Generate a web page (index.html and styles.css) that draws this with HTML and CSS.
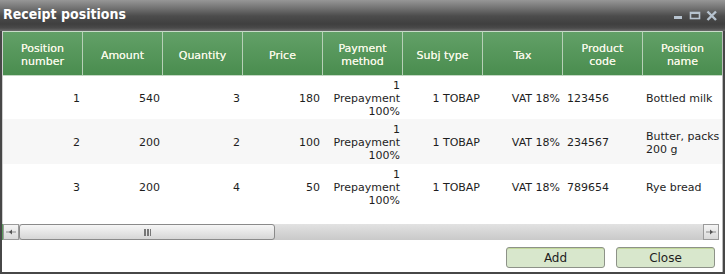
FILE: index.html
```html
<!DOCTYPE html>
<html>
<head>
<meta charset="utf-8">
<link rel="stylesheet" href="styles.css">
</head>
<body>
<div class="window">
  <div class="titlebar">
    <span class="title">Receipt positions</span>
    <svg class="controls" width="52" height="31" viewBox="0 0 52 31">
      <rect x="9" y="16" width="8" height="3" fill="#b7c3cf"/>
      <rect x="25.5" y="12.5" width="9" height="6" fill="none" stroke="#b7c3cf" stroke-width="1.6"/>
      <rect x="25" y="12" width="10" height="2" fill="#b7c3cf"/>
      <path d="M42.5 11.5 L51 20 M51 11.5 L42.5 20" stroke="#b7c3cf" stroke-width="2.4"/>
    </svg>
  </div>
  <div class="content">
    <div class="grid">
      <table class="table">
        <thead>
          <tr>
            <th>Position<br>number</th>
            <th>Amount</th>
            <th>Quantity</th>
            <th>Price</th>
            <th>Payment<br>method</th>
            <th>Subj type</th>
            <th>Tax</th>
            <th>Product<br>code</th>
            <th>Position<br>name</th>
          </tr>
        </thead>
        <tbody>
          <tr class="r1">
            <td>1</td><td>540</td><td>3</td><td>180</td>
            <td>1<br>Prepayment<br>100%</td><td>1 TOBAP</td><td>VAT 18%</td>
            <td class="left">123456</td><td class="left name">Bottled milk</td>
          </tr>
          <tr class="r2 alt">
            <td>2</td><td>200</td><td>2</td><td>100</td>
            <td>1<br>Prepayment<br>100%</td><td>1 TOBAP</td><td>VAT 18%</td>
            <td class="left">234567</td><td class="left name">Butter, packs<br>200 g</td>
          </tr>
          <tr class="r3">
            <td>3</td><td>200</td><td>4</td><td>50</td>
            <td>1<br>Prepayment<br>100%</td><td>1 TOBAP</td><td>VAT 18%</td>
            <td class="left">789654</td><td class="left name">Rye bread</td>
          </tr>
        </tbody>
      </table>
    </div>
    <div class="hscroll">
      <div class="sbtn">
        <svg width="14" height="14" viewBox="0 0 14 14"><path d="M2 7 H12" stroke="#8a8a8a" stroke-width="1"/><path d="M5 7 L8 4.5 L8 9.5 Z" fill="#555"/></svg>
      </div>
      <div class="thumb"><span class="grip"></span></div>
      <div class="track"></div>
      <div class="sbtn">
        <svg width="14" height="14" viewBox="0 0 14 14"><path d="M2 7 H12" stroke="#8a8a8a" stroke-width="1"/><path d="M9 7 L6 4.5 L6 9.5 Z" fill="#555"/></svg>
      </div>
    </div>
    <div class="footer">
      <button class="btn">Add</button>
      <button class="btn">Close</button>
    </div>
  </div>
</div>
</body>
</html>
```

FILE: styles.css
```css
html, body {
  margin: 0;
  padding: 0;
  background: #ffffff;
}

.window {
  width: 725px;
  height: 274px;
  background: #474747;
  display: flex;
  flex-direction: column;
  box-sizing: border-box;
}

.titlebar {
  height: 31px;
  flex: none;
  display: flex;
  align-items: flex-start;
  justify-content: space-between;
  background: linear-gradient(#979797 0px, #6e6e6e 9px, #4c4c4c 16px, #3f3f3f 24px, #4a4a4a 28px, #6a6a6a 31px);
}

.title {
  font-family: "DejaVu Sans Condensed", "DejaVu Sans", sans-serif;
  font-weight: bold;
  font-size: 14px;
  color: #ffffff;
  padding: 4px 0 0 3px;
  line-height: 20px;
}

.controls {
  margin-right: 8px;
}

.content {
  flex: 1;
  margin: 0 2px 2px 2px;
  background: #ffffff;
  display: flex;
  flex-direction: column;
  border-right: 1px solid #b9b9b9;
}

.grid {
  height: 193px;
  border-left: 1px solid #cfcfcf;
  overflow: hidden;
  flex: none;
}

.table {
  border-collapse: separate;
  border-spacing: 0;
  table-layout: fixed;
  width: 720px;
  font-family: "DejaVu Sans", Verdana, sans-serif;
  font-size: 11px;
  line-height: 13px;
}

.table th {
  width: 80px;
  box-sizing: border-box;
  height: 45px;
  padding: 3px 2px 0 2px;
  font-weight: normal;
  color: #f5f7e6;
  text-align: center;
  vertical-align: middle;
  background: linear-gradient(#62a067, #4a8d4f);
  border-right: 1px solid #b7d0b7;
  border-top: 1px solid #c9dcc9;
  border-bottom: 1px solid #c4d8c4;
  text-shadow: 0 0 0.4px #f5f7e6;
}

.table td {
  padding: 2px 3px 0 2px;
  text-align: right;
  vertical-align: middle;
  color: #1e1e1e;
  white-space: nowrap;
}

.table td.left {
  text-align: left;
  padding-left: 4px;
}

.table td.name {
  padding-left: 3px;
}

.r1 td { height: 43px; box-sizing: border-box; }
.r2 td { height: 45px; box-sizing: border-box; }
.r3 td { height: 44px; box-sizing: border-box; }

.alt td {
  background: #f7f7f7;
}

.hscroll {
  height: 16px;
  width: 717px;
  flex: none;
  display: flex;
  border-left: 1px solid #5a9a5c;
  box-sizing: border-box;
  background: linear-gradient(#e2e2e2, #c9c9c9);
}

.sbtn {
  width: 16px;
  height: 16px;
  box-sizing: border-box;
  border: 1px solid #9a9a9a;
  background: linear-gradient(#f5f5f5, #d9d9d9);
  display: flex;
  align-items: center;
  justify-content: center;
  flex: none;
}

.thumb {
  width: 256px;
  height: 16px;
  box-sizing: border-box;
  border: 1px solid #8a8a8a;
  border-radius: 3px;
  background: linear-gradient(#f6f6f6, #e6e6e6 50%, #d6d6d6);
  display: flex;
  align-items: center;
  justify-content: center;
  flex: none;
}

.grip {
  width: 7px;
  height: 7px;
  background: repeating-linear-gradient(90deg, #777 0 2px, transparent 2px 3px);
}

.track {
  flex: 1;
}

.footer {
  flex: 1;
  display: flex;
  justify-content: flex-end;
  align-items: flex-start;
  gap: 11px;
  padding: 7px 7px 0 0;
}

.btn {
  width: 99px;
  height: 21px;
  box-sizing: border-box;
  margin: 0;
  padding: 0;
  border: 1px solid #8d9288;
  border-radius: 3px;
  background: #d8e7cc;
  font-family: "DejaVu Sans", Verdana, sans-serif;
  font-size: 12px;
  color: #1e1e1e;
  box-shadow: inset 0 1px 0 #c3d99b;
}
```
